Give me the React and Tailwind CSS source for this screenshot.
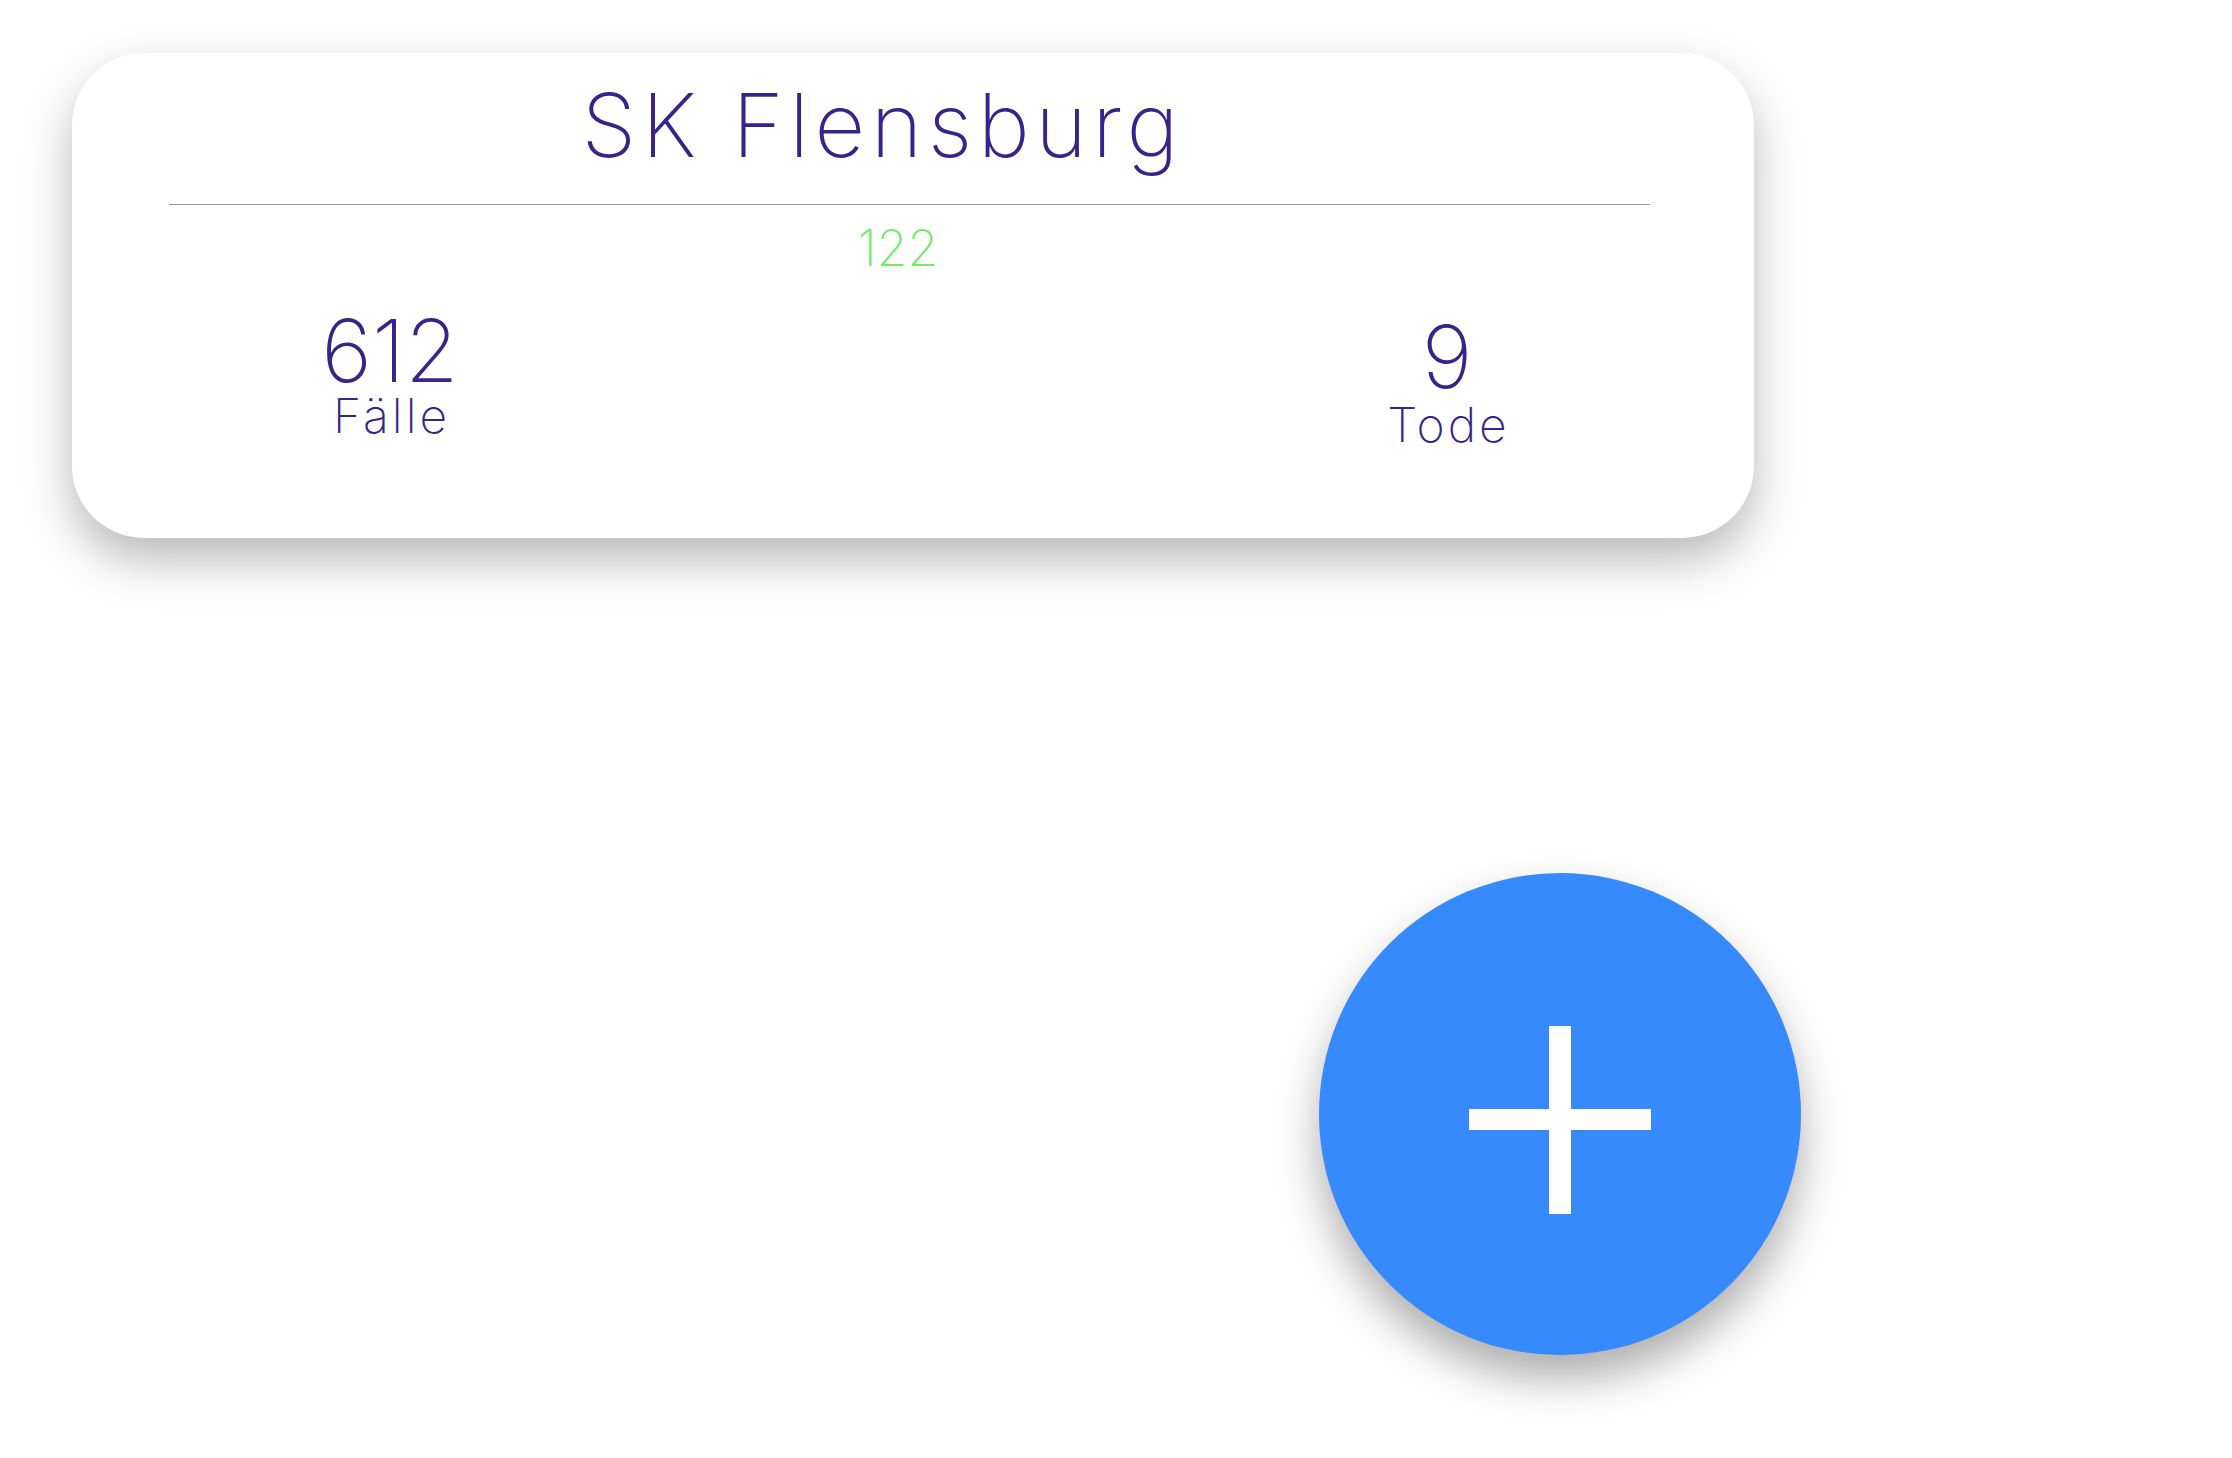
import React from "react";

const stats = [
  { value: "612", label: "Fälle", offset: "mt-0", labelGap: "mt-[1px]" },
  { value: "9", label: "Tode", offset: "mt-[6px]", labelGap: "mt-[4px]" },
];

function Stat({ value, label, offset, labelGap }) {
  return (
    <div className={`w-[300px] flex flex-col items-center ${offset}`}>
      <span className="text-[87px] leading-[80px]">{value}</span>
      <span className={`text-[48px] leading-none tracking-[3px] pl-[3px] ${labelGap}`}>{label}</span>
    </div>
  );
}

export default function App() {
  return (
    <div
      className="relative w-full min-h-screen bg-white overflow-hidden text-[#37238a] font-extralight"
      style={{ fontFamily: "Inter, 'Noto Sans', sans-serif" }}
    >
      <div className="pt-[53px] pl-[72px]">
        {/* Kreis-Karte */}
        <div className="w-[1682px] h-[485px] rounded-[72px] bg-white shadow-[0_22px_48px_rgba(0,0,0,0.28)] pt-[28px]">
          <div className="flex justify-center pr-[66px]">
            <h1 className="text-[88px] leading-none font-extralight tracking-[5.5px] pl-[5.5px]">SK Flensburg</h1>
          </div>
          <div className="ml-[97px] mr-[104px] mt-[35px] h-px bg-[#9b9b9b]" />
          <div className="flex justify-center pr-[30px] mt-[18px]">
            <span className="text-[50px] leading-none text-[#72ee66]">122</span>
          </div>
          <div className="flex justify-between items-start pl-[168px] pr-[157px] mt-[38px]">
            {stats.map((s) => (
              <Stat key={s.label} {...s} />
            ))}
          </div>
        </div>
      </div>

      {/* Floating action button */}
      <button className="absolute left-[1319px] top-[873px] w-[482px] h-[482px] rounded-full bg-[#378afe] shadow-[0_24px_44px_rgba(0,0,0,0.32)] flex items-center justify-center">
        <svg width="182" height="188" viewBox="0 0 182 188" className="mt-[12px]">
          <rect x="80" y="0" width="22" height="188" fill="#ffffff" />
          <rect x="0" y="83" width="182" height="21" fill="#ffffff" />
        </svg>
      </button>
    </div>
  );
}
